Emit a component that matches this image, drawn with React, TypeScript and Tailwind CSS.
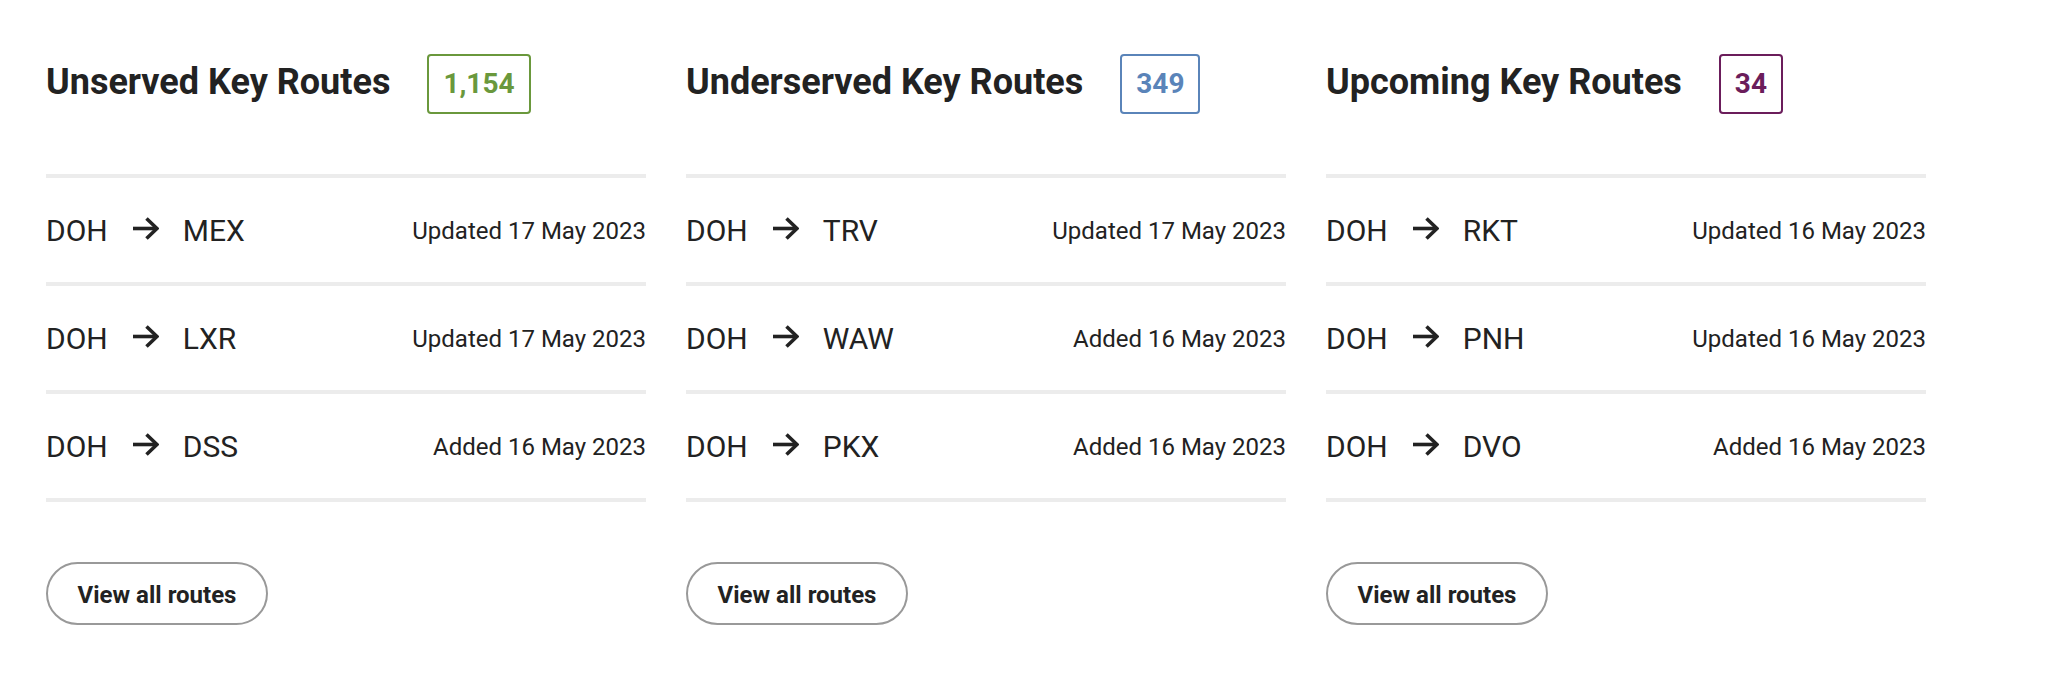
import React from "react";

type Row = { from: string; to: string; note: string };
type Col = { title: string; count: string; color: string; rows: Row[] };

const cols: Col[] = [
  {
    title: "Unserved Key Routes",
    count: "1,154",
    color: "green",
    rows: [
      { from: "DOH", to: "MEX", note: "Updated 17 May 2023" },
      { from: "DOH", to: "LXR", note: "Updated 17 May 2023" },
      { from: "DOH", to: "DSS", note: "Added 16 May 2023" },
    ],
  },
  {
    title: "Underserved Key Routes",
    count: "349",
    color: "blue",
    rows: [
      { from: "DOH", to: "TRV", note: "Updated 17 May 2023" },
      { from: "DOH", to: "WAW", note: "Added 16 May 2023" },
      { from: "DOH", to: "PKX", note: "Added 16 May 2023" },
    ],
  },
  {
    title: "Upcoming Key Routes",
    count: "34",
    color: "purple",
    rows: [
      { from: "DOH", to: "RKT", note: "Updated 16 May 2023" },
      { from: "DOH", to: "PNH", note: "Updated 16 May 2023" },
      { from: "DOH", to: "DVO", note: "Added 16 May 2023" },
    ],
  },
];

function Badge({ count, color }: { count: string; color: string }) {
  const cls =
    color === "green"
      ? "border-[#6a983c] text-[#6a983c]"
      : color === "blue"
      ? "border-[#5a84b9] text-[#5a84b9]"
      : "border-[#6b1d5b] text-[#6b1d5b]";
  return (
    <div
      className={`h-[60px] px-[14px] flex items-center justify-center border-2 rounded-[4px] text-[28px] font-bold leading-none ${cls}`}
    >
      {count}
    </div>
  );
}

function Arrow() {
  return (
    <svg width="27" height="23" viewBox="0 0 27 23" className="mb-[5px]">
      <path d="M1 11.5H24" stroke="#222" strokeWidth="3.6" fill="none" />
      <path d="M14.5 1.5L25 11.5L14.5 21.5" stroke="#222" strokeWidth="3.6" fill="none" />
    </svg>
  );
}

export default function App() {
  return (
    <div
      className="w-[2052px] h-[680px] bg-white text-[#222] pl-[46px] pt-[54px] flex gap-[40px]"
      style={{ fontFamily: "Roboto, 'Liberation Sans', sans-serif" }}
    >
      {cols.map((c) => (
        <div key={c.title} className="w-[600px] flex flex-col">
          <div className="h-[60px] flex items-center gap-[37px]">
            <h2 className="text-[36px] font-bold leading-none mt-[-4px]">{c.title}</h2>
            <Badge count={c.count} color={c.color} />
          </div>
          <div className="mt-[60px] border-t-4 border-[#ececec]">
            {c.rows.map((r) => (
              <div
                key={r.to}
                className="h-[108px] pt-[2px] border-b-4 border-[#ececec] flex items-center justify-between"
              >
                <div className="flex items-center text-[30px] leading-none">
                  <span>{r.from}</span>
                  <span className="ml-[24px] mr-[24px] flex items-center">
                    <Arrow />
                  </span>
                  <span>{r.to}</span>
                </div>
                <span className="text-[24px] leading-none">{r.note}</span>
              </div>
            ))}
          </div>
          <button className="mt-[60px] w-[222px] h-[63px] pt-[2px] rounded-full border-2 border-[#999] text-[24px] font-bold text-[#222] flex items-center justify-center">
            View all routes
          </button>
        </div>
      ))}
    </div>
  );
}
